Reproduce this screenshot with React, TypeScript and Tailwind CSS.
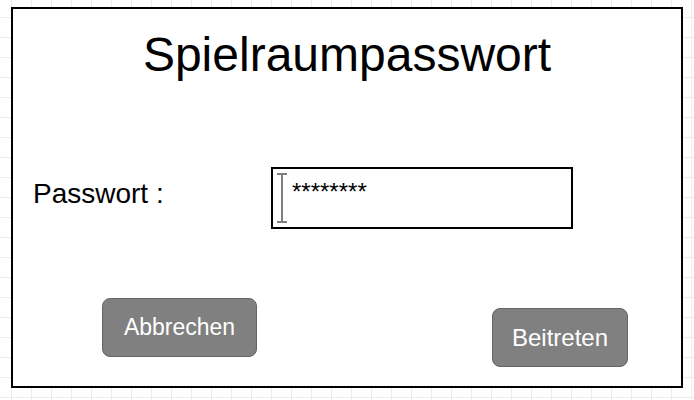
export default function App() {
  return (
    <div
      className="w-full h-[400px] overflow-hidden bg-white bg-[linear-gradient(to_right,#ececec_1px,transparent_1px),linear-gradient(to_bottom,#ececec_1px,transparent_1px)] bg-[size:20px_20px] bg-[position:11px_17px] pl-[11px] pt-[7px]"
      style={{ fontFamily: '"Liberation Sans", Arial, sans-serif' }}
    >
      <div className="w-[672px] h-[381px] border-2 border-black bg-white flex flex-col">
        <h1 className="mt-[22px] text-[48px] leading-none text-center text-black">
          Spielraumpasswort
        </h1>
        <div className="mt-[88px] flex pl-[20px] items-start">
          <div className="w-[238px] mt-[13px] text-[28px] leading-none text-black whitespace-pre">
            Passwort :
          </div>
          <div className="relative w-[302px] h-[62px] border-2 border-black pl-[19px] pt-[11px] text-[24px] leading-none text-black">
            <svg
              className="absolute left-[4px] top-[4px]"
              width="10"
              height="50"
              viewBox="0 0 10 50"
            >
              <line x1="0" y1="1" x2="10" y2="1" stroke="#808080" strokeWidth="2" />
              <line x1="5" y1="0" x2="5" y2="50" stroke="#808080" strokeWidth="2" />
              <line x1="0" y1="49" x2="10" y2="49" stroke="#808080" strokeWidth="2" />
            </svg>
            ********
          </div>
        </div>
        <div className="mt-[69px] flex items-start justify-between pl-[89px] pr-[53px]">
          <button className="w-[155px] h-[59px] rounded-[8px] border border-[#666666] bg-[#808080] text-white text-[23px] leading-none">
            Abbrechen
          </button>
          <button className="mt-[10px] w-[136px] h-[59px] rounded-[8px] border border-[#666666] bg-[#808080] text-white text-[24px] leading-none">
            Beitreten
          </button>
        </div>
      </div>
    </div>
  );
}
